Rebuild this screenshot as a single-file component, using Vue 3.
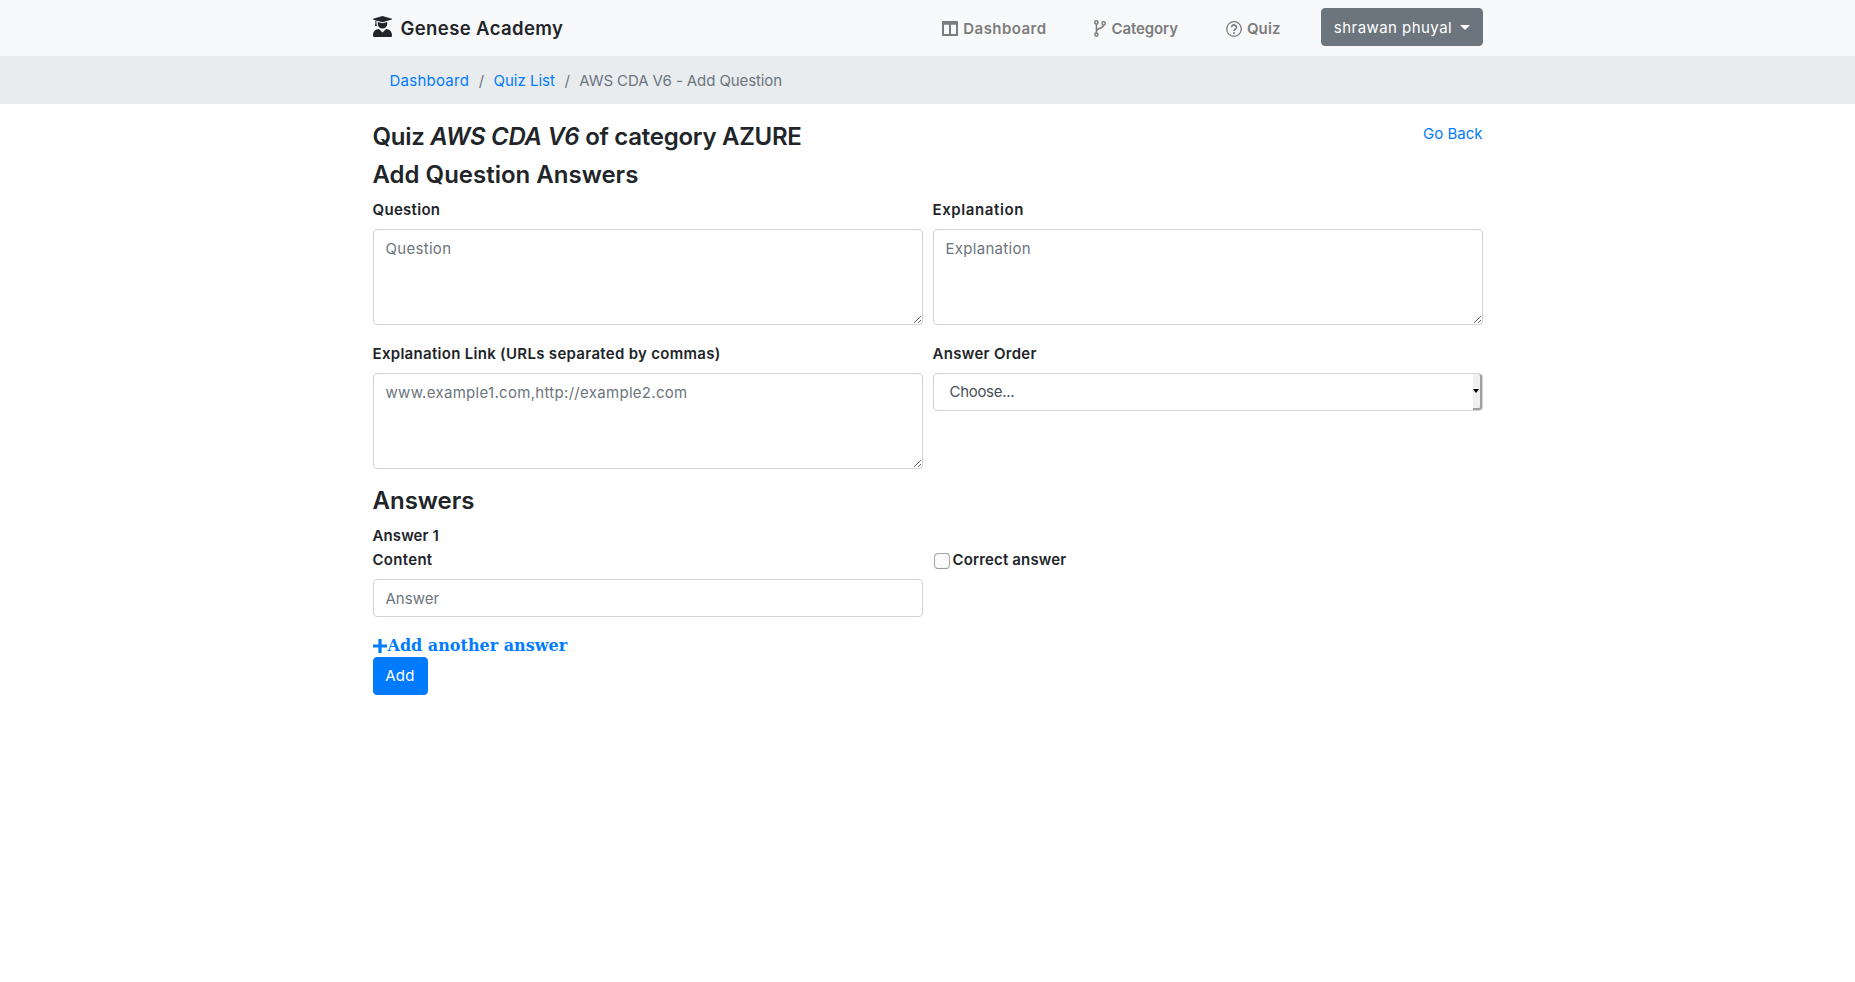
<script setup>
const navItems = [
  { key: 'dash', label: 'Dashboard' },
  { key: 'cat', label: 'Category' },
  { key: 'quiz', label: 'Quiz' }
]
</script>

<template>
  <div class="page">
    <nav class="navbar">
      <div class="container nav-inner">
        <a class="brand">
          <svg class="brand-icon" viewBox="0 0 18 20" width="19" height="21">
            <path d="M9 0 18 2.600v.8L9 6 3.200 4.300 3.200 4.900V7.600L3.700 9.600H1.700L2.200 7.600V4.900L2.600 4 0 3.400v-.8z" fill="#212529"/>
            <path d="M4.500 5.600 9 7l4.500-1.400V7.500a4.500 4.500 0 0 1-9 0z" fill="#212529"/>
            <path d="M5.600 12.300 9 15.700l3.400-3.400C15.800 12.500 18 14.900 18 17.900V19a1 1 0 0 1-1 1H1a1 1 0 0 1-1-1v-1.100c0-3 2.200-5.400 5.600-5.600z" fill="#212529"/>
          </svg>
          <span>Genese Academy</span>
        </a>
        <div class="nav-right">
          <a v-for="item in navItems" :key="item.key" class="nav-link" :class="'nav-' + item.key">
            <svg v-if="item.key === 'dash'" viewBox="0 0 16 15" width="16" height="15">
              <path fill-rule="evenodd" d="M.8 0h14.400a.8.8 0 0 1 .8.800v13.400a.8.8 0 0 1-.8.800H.8a.8.8 0 0 1-.8-.8V.8A.8.8 0 0 1 .8 0zM2 3.800v9.200h5V3.800zm7 0v9.200h5V3.800z" fill="#7c7c7d"/>
            </svg>
            <svg v-else-if="item.key === 'cat'" viewBox="0 0 12 17" width="12" height="17" fill="none" stroke="#7c7c7d" stroke-width="1.500">
              <circle cx="2.400" cy="2.400" r="1.600"/><circle cx="2.400" cy="14.600" r="1.600"/><circle cx="9.600" cy="3.400" r="1.600"/>
              <path d="M2.400 4v9M9.600 5c0 3.800-7.200 2.800-7.200 6.600"/>
            </svg>
            <svg v-else viewBox="0 0 16 16" width="16" height="16" fill="none" stroke="#7c7c7d" stroke-width="1.300">
              <circle cx="8" cy="8" r="7.300"/>
              <path d="M5.600 6.200a2.400 2.300 0 1 1 3.800 1.900c-.9.700-1.400 1.100-1.400 2" stroke-width="1.600"/>
              <circle cx="8" cy="12" r="1" fill="#7c7c7d" stroke="none"/>
            </svg>
            <span>{{ item.label }}</span>
          </a>
          <button class="user-btn" type="button">shrawan phuyal<span class="caret"></span></button>
        </div>
      </div>
    </nav>

    <div class="crumbs">
      <ol class="container crumb-list">
        <li><a class="crumb-first">Dashboard</a></li>
        <li class="sep">/</li>
        <li><a>Quiz List</a></li>
        <li class="sep">/</li>
        <li class="current">AWS CDA V6 - Add Question</li>
      </ol>
    </div>

    <main class="container content">
      <div class="title-row">
        <h4 class="quiz-title">Quiz <em>AWS CDA V6</em> of category AZURE</h4>
        <a class="back">Go Back</a>
      </div>
      <h4>Add Question Answers</h4>

      <form class="form" @submit.prevent>
        <div class="form-row first-row">
          <div class="field">
            <label>Question</label>
            <textarea placeholder="Question"></textarea>
          </div>
          <div class="field">
            <label class="label-explain">Explanation</label>
            <textarea placeholder="Explanation"></textarea>
          </div>
        </div>
        <div class="form-row">
          <div class="field">
            <label>Explanation Link (URLs separated by commas)</label>
            <textarea placeholder="www.example1.com,http://example2.com"></textarea>
          </div>
          <div class="field">
            <label>Answer Order</label>
            <div class="select-wrap">
              <select>
                <option>Choose...</option>
              </select>
              <span class="select-btn"><i></i></span>
            </div>
          </div>
        </div>

        <h4 class="answers">Answers</h4>
        <div class="answer-title">Answer 1</div>
        <div class="form-row">
          <div class="field">
            <label>Content</label>
            <input type="text" placeholder="Answer" />
          </div>
          <div class="field">
            <label class="check"><input type="checkbox" />Correct answer</label>
          </div>
        </div>

        <a class="add-another">
          <svg viewBox="0 0 14 14" width="14" height="14"><path d="M5.400 0h3.200v5.400H14v3.200H8.600V14H5.400V8.600H0V5.400h5.400z" fill="#007bff"/></svg>Add another answer
        </a>
        <button class="submit" type="submit">Add</button>
      </form>
    </main>
  </div>
</template>

<style>
html, body { margin: 0; background: #fff; }
</style>

<style scoped>
.page {
  font-family: "Inter", "Liberation Sans", sans-serif;
  font-size: 15px;
  line-height: 24px;
  color: #212529;
  min-height: 982px;
  background: #fff;
}
.container {
  width: 1110px;
  margin: 0 auto;
  box-sizing: border-box;
}
.navbar {
  height: 56px;
  box-sizing: border-box;
  padding-top: 8px;
  background: #f8f9fa;
}
.nav-inner {
  display: flex;
  align-items: center;
  justify-content: space-between;
}
.brand {
  display: flex;
  align-items: center;
  gap: 9px;
  padding-top: 2px;
  font-size: 18.500px;
  letter-spacing: .4px;
  font-weight: 600;
  color: #212529;
}
.brand-icon { margin-top: -3px; }
.nav-right {
  display: flex;
  align-items: center;
}
.nav-link {
  display: flex;
  align-items: center;
  gap: 5px;
  font-weight: 600;
  font-size: 15px;
  color: #7c7c7d;
  padding-top: 3px;
}
.nav-dash { margin-right: 48px; letter-spacing: .45px; }
.nav-cat { margin-right: 48px; letter-spacing: -.1px; }
.nav-quiz { margin-right: 40px; letter-spacing: .1px; }
.user-btn {
  font: inherit;
  height: 38px;
  width: 162px;
  padding: 1px 0 0 1px;
  background: #6c757d;
  color: #fff;
  border: 1px solid #6c757d;
  border-radius: 4px;
  letter-spacing: .45px;
}
.caret {
  display: inline-block;
  margin-left: 8px;
  vertical-align: 3px;
  border-top: 5px solid #fff;
  border-left: 5px solid transparent;
  border-right: 5px solid transparent;
}
.crumbs {
  height: 48px;
  background: #e9ecef;
  display: flex;
  align-items: center;
}
.crumb-list {
  list-style: none;
  padding: 2px 0 0 17px;
  margin: 0 auto;
  display: flex;
  align-items: center;
  gap: 9.500px;
}
.crumb-list a { color: #007bff; }
.crumb-first { letter-spacing: .25px; }
.sep { color: #6c757d; }
.current { color: #6c757d; letter-spacing: -.1px; }
.content { padding-top: 18px; }
.title-row {
  display: flex;
  justify-content: space-between;
  align-items: flex-start;
}
h4 {
  margin: 0 0 8.500px;
  font-size: 24px;
  line-height: 29px;
  font-weight: 600;
}
.quiz-title { letter-spacing: -.27px; }
.back { color: #007bff; }
.form-row {
  display: grid;
  grid-template-columns: 1fr 1fr;
  column-gap: 10px;
}
.field { min-width: 0; margin-bottom: 17px; }
label {
  display: block;
  font-weight: 600;
  font-size: 15px;
  letter-spacing: .3px;
  margin-bottom: 7.500px;
}
.first-row label {
  margin-top: 1px;
  margin-bottom: 6.500px;
}
.label-explain { letter-spacing: .6px; }
textarea, input[type="text"], select {
  display: block;
  width: 100%;
  box-sizing: border-box;
  font: inherit;
  color: #495057;
  background: #fff;
  border: 1px solid #ced4da;
  border-radius: 4px;
  padding: 6px 12px;
  outline: none;
}
textarea { height: 96px; letter-spacing: .3px; padding-top: 7px; }
input[type="text"] { height: 38px; }
textarea::placeholder, input::placeholder { color: #6c757d; opacity: 1; }
.select-wrap { position: relative; }
select {
  height: 38px;
  appearance: none;
  padding-left: 16px;
  letter-spacing: -.3px;
}
.select-btn {
  position: absolute;
  top: 1px;
  right: 1px;
  bottom: 1px;
  width: 9px;
  background: #f0f0f0;
  border-right: 2px solid #a0a0a0;
  border-bottom: 2px solid #a0a0a0;
  border-radius: 0 3px 3px 0;
  box-sizing: border-box;
  display: flex;
  align-items: center;
  justify-content: center;
}
.select-btn i {
  border-top: 4px solid #000;
  border-left: 3px solid transparent;
  border-right: 3px solid transparent;
}
.answers { margin-top: 0; }
.answer-title {
  font-weight: 600;
  font-size: 15px;
  letter-spacing: .1px;
}
.check {
  display: flex;
  align-items: center;
  gap: 3px;
  padding-left: 1px;
  letter-spacing: .15px;
}
.check input {
  appearance: none;
  margin: 2px 0 0;
  width: 16px;
  height: 16px;
  flex: none;
  box-sizing: border-box;
  background: #fbfbfb;
  border: 1px solid #a8a8a8;
  border-bottom-color: #9a9a9a;
  border-radius: 4px;
  box-shadow: inset 0 0 1px #d0d0d0;
}
.add-another {
  display: flex;
  align-items: center;
  line-height: 23px;
  font-family: "DejaVu Serif", serif;
  font-weight: 700;
  font-size: 16px;
  color: #007bff;
}
.add-another svg { margin-right: 1px; }
.submit {
  display: block;
  font: inherit;
  width: 55px;
  height: 38px;
  background: #007bff;
  color: #fff;
  border: 1px solid #007bff;
  border-radius: 4px;
  padding: 0;
  letter-spacing: .3px;
}
</style>
